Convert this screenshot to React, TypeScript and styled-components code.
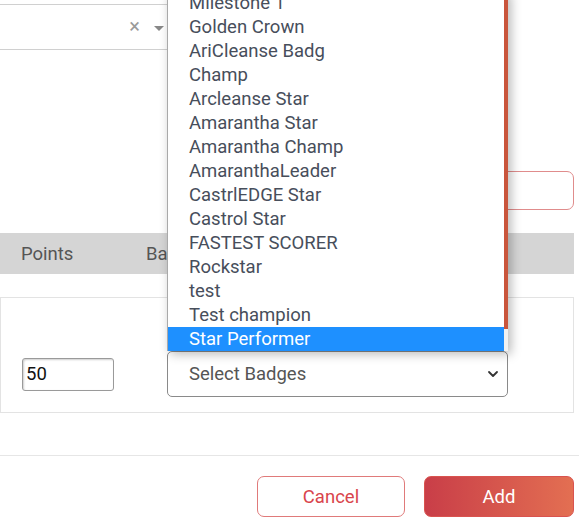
import styled, { createGlobalStyle } from "styled-components";

const GlobalStyle = createGlobalStyle`
  html, body {
    margin: 0;
    padding: 0;
    background: #fff;
    overflow: hidden;
  }
  body {
    font-family: Roboto, "Liberation Sans", sans-serif;
  }
  * {
    box-sizing: border-box;
  }
`;

const Page = styled.div`
  position: relative;
  width: 579px;
  height: 532px;
  padding-top: 4px;
  overflow: hidden;
`;

const Select2Box = styled.div`
  width: 190px;
  height: 46px;
  margin-left: -10px;
  border: 1px solid #d0d0d0;
  display: flex;
  align-items: center;
  justify-content: flex-end;
  gap: 14px;
  padding-right: 15px;
`;

const ClearMark = styled.span`
  font-size: 20px;
  color: #9a9a9a;
  line-height: 1;
  margin-top: -2px;
`;

const Caret = styled.span`
  width: 0;
  height: 0;
  border-left: 5px solid transparent;
  border-right: 5px solid transparent;
  border-top: 5px solid #888;
  margin-top: 2px;
`;

const RightFieldRow = styled.div`
  display: flex;
  justify-content: flex-end;
  padding-right: 5px;
  margin-top: 121px;
`;

const RedInput = styled.input`
  width: 290px;
  height: 39px;
  border: 1.5px solid #e08c8c;
  border-radius: 7px;
  outline: none;
  font: inherit;
`;

const TableHead = styled.div`
  display: grid;
  grid-template-columns: 125px 1fr;
  align-items: center;
  height: 41px;
  margin: 23px 5px 0 0;
  padding-left: 21px;
  background: #d5d5d5;
  color: #555;
  font-size: 18.5px;
`;

const RowBox = styled.div`
  display: grid;
  grid-template-columns: 92px 341px;
  column-gap: 53px;
  align-items: center;
  align-content: end;
  height: 116px;
  margin: 23px 5px 0 0;
  padding: 0 0 15px 21px;
  border: 1px solid #e3e3e3;
`;

const PointsInput = styled.input`
  width: 92px;
  height: 33px;
  border: 1px solid #9a9a9a;
  border-radius: 3px;
  box-shadow: inset 1px 1px 2px rgba(0, 0, 0, 0.2);
  padding: 0 3px;
  font: 18.5px Roboto, "Liberation Sans", sans-serif;
  color: #111;
  outline: none;
`;

const SelectWrap = styled.div`
  position: relative;
  width: 341px;
  height: 46px;
`;

const BadgeSelect = styled.select`
  appearance: none;
  width: 100%;
  height: 100%;
  border: 1px solid #8a8a8a;
  border-radius: 5px;
  background: #fff;
  padding-left: 21px;
  font: 18.5px Roboto, "Liberation Sans", sans-serif;
  color: #555;
  outline: none;
`;

const Chevron = styled.svg`
  position: absolute;
  right: 9px;
  top: 17px;
  pointer-events: none;
`;

const Footer = styled.div`
  display: flex;
  justify-content: flex-end;
  gap: 19px;
  margin-top: 42px;
  padding: 20px 5px 0 0;
  border-top: 1.5px solid #e6e6e6;
`;

const Button = styled.button<{ $primary?: boolean }>`
  width: ${({ $primary }) => ($primary ? "150px" : "148px")};
  height: 41px;
  border-radius: 7px;
  font: 18.5px Roboto, "Liberation Sans", sans-serif;
  cursor: pointer;
  border: 1.5px solid ${({ $primary }) => ($primary ? "#d9534f" : "#e07a7a")};
  color: ${({ $primary }) => ($primary ? "#fff" : "#d9444c")};
  background: ${({ $primary }) =>
    $primary ? "linear-gradient(90deg, #c93e48 0%, #e36f52 100%)" : "#fff"};
`;

const Dropdown = styled.div`
  position: absolute;
  left: 167px;
  top: -9px;
  width: 341px;
  display: flex;
  background: #fff;
  border-left: 1px solid #a9a9a9;
  box-shadow: 3px 3px 10px rgba(0, 0, 0, 0.28);
`;

const OptionList = styled.ul`
  flex: 1;
  list-style: none;
  margin: 0;
  padding: 0;
`;

const Option = styled.li<{ $active?: boolean }>`
  height: 24px;
  line-height: 24px;
  padding-left: 21px;
  font-size: 18.5px;
  color: ${({ $active }) => ($active ? "#fff" : "#474e5b")};
  background: ${({ $active }) => ($active ? "#1e90ff" : "transparent")};
  white-space: nowrap;
`;

const ScrollTrack = styled.div`
  width: 4px;
  background: #f1f1f1;
`;

const ScrollThumb = styled.div`
  height: 338px;
  background: #c9553c;
`;

const badges = [
  "Milestone 1",
  "Golden Crown",
  "AriCleanse Badg",
  "Champ",
  "Arcleanse Star",
  "Amarantha Star",
  "Amarantha Champ",
  "AmaranthaLeader",
  "CastrlEDGE Star",
  "Castrol Star",
  "FASTEST SCORER",
  "Rockstar",
  "test",
  "Test champion",
  "Star Performer",
];

const App = () => {
  return (
    <>
      <GlobalStyle />
      <Page>
        <Select2Box>
          <ClearMark>×</ClearMark>
          <Caret />
        </Select2Box>

        <RightFieldRow>
          <RedInput />
        </RightFieldRow>

        <TableHead>
          <span>Points</span>
          <span>Badges</span>
        </TableHead>

        <RowBox>
          <PointsInput defaultValue="50" />
          <SelectWrap>
            <BadgeSelect defaultValue="">
              <option value="">Select Badges</option>
            </BadgeSelect>
            <Chevron width="12" height="12" viewBox="0 0 12 12">
              <path
                d="M2 4l4 4 4-4"
                fill="none"
                stroke="#333"
                strokeWidth="1.8"
                strokeLinecap="round"
                strokeLinejoin="round"
              />
            </Chevron>
          </SelectWrap>
        </RowBox>

        <Footer>
          <Button>Cancel</Button>
          <Button $primary>Add</Button>
        </Footer>

        <Dropdown>
          <OptionList>
            {badges.map((b) => (
              <Option key={b} $active={b === "Star Performer"}>
                {b}
              </Option>
            ))}
          </OptionList>
          <ScrollTrack>
            <ScrollThumb />
          </ScrollTrack>
        </Dropdown>
      </Page>
    </>
  );
};

export default App;
